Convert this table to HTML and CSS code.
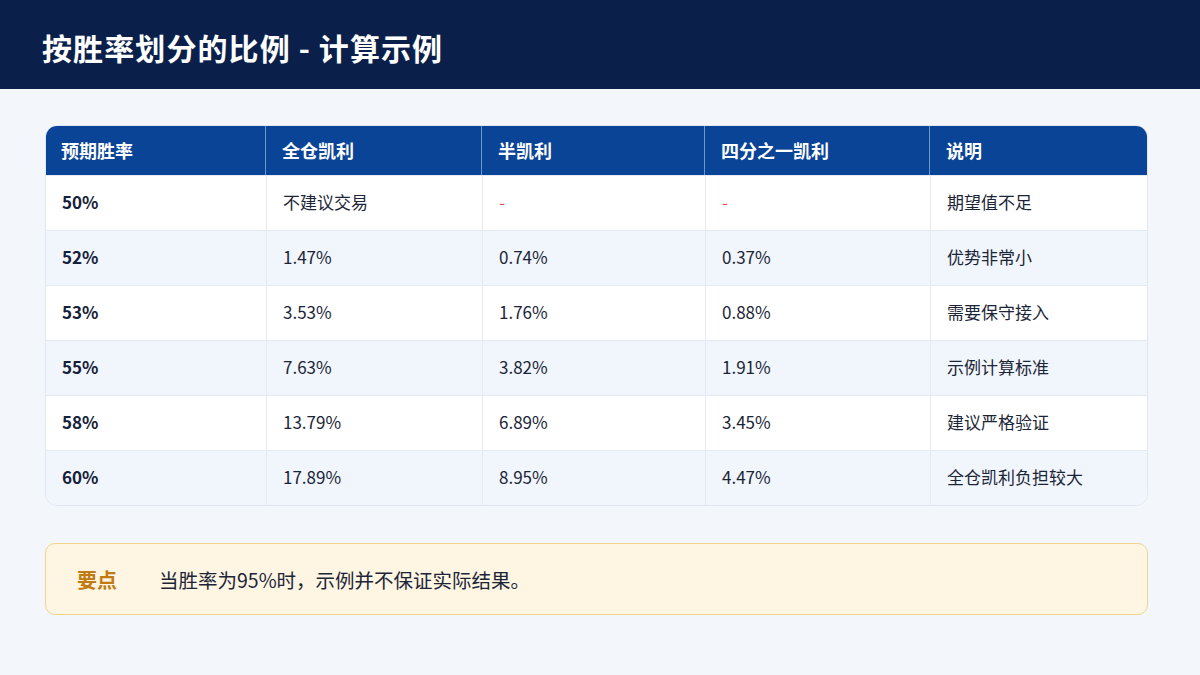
FILE: index.html
```html
<!DOCTYPE html>
<html lang="zh">
<head>
<meta charset="utf-8">
<link rel="stylesheet" href="styles.css">
</head>
<body>
<header class="topbar">
  <h1 class="title">按胜率划分的比例 - 计算示例</h1>
</header>
<main class="content">
  <div class="table">
    <div class="row head">
      <div class="cell">预期胜率</div>
      <div class="cell">全仓凯利</div>
      <div class="cell">半凯利</div>
      <div class="cell">四分之一凯利</div>
      <div class="cell">说明</div>
    </div>
    <div class="row">
      <div class="cell strong">50%</div>
      <div class="cell">不建议交易</div>
      <div class="cell dash">-</div>
      <div class="cell dash">-</div>
      <div class="cell">期望值不足</div>
    </div>
    <div class="row alt">
      <div class="cell strong">52%</div>
      <div class="cell">1.47%</div>
      <div class="cell">0.74%</div>
      <div class="cell">0.37%</div>
      <div class="cell">优势非常小</div>
    </div>
    <div class="row">
      <div class="cell strong">53%</div>
      <div class="cell">3.53%</div>
      <div class="cell">1.76%</div>
      <div class="cell">0.88%</div>
      <div class="cell">需要保守接入</div>
    </div>
    <div class="row alt">
      <div class="cell strong">55%</div>
      <div class="cell">7.63%</div>
      <div class="cell">3.82%</div>
      <div class="cell">1.91%</div>
      <div class="cell">示例计算标准</div>
    </div>
    <div class="row">
      <div class="cell strong">58%</div>
      <div class="cell">13.79%</div>
      <div class="cell">6.89%</div>
      <div class="cell">3.45%</div>
      <div class="cell">建议严格验证</div>
    </div>
    <div class="row alt last">
      <div class="cell strong">60%</div>
      <div class="cell">17.89%</div>
      <div class="cell">8.95%</div>
      <div class="cell">4.47%</div>
      <div class="cell">全仓凯利负担较大</div>
    </div>
  </div>
  <div class="note">
    <span class="note-label">要点</span>
    <span class="note-text">当胜率为95%时，示例并不保证实际结果。</span>
  </div>
</main>
</body>
</html>
```
FILE: styles.css
```css
* { box-sizing: border-box; }
html, body { margin: 0; padding: 0; }
body {
  width: 1200px;
  height: 675px;
  overflow: hidden;
  background: #f3f7fc;
  font-family: "Noto Sans CJK SC", "Noto Sans", sans-serif;
  color: #1b2537;
}
.topbar {
  height: 89px;
  background: #0b1f4b;
  display: flex;
  align-items: center;
  padding-left: 42px;
  padding-top: 4px;
}
.title {
  margin: 0;
  color: #ffffff;
  font-size: 30px;
  font-weight: 700;
  letter-spacing: 1.1px;
}
.content {
  padding: 36px 52px 0 45px;
}
.table {
  width: 1103px;
  border: 1px solid #dfe7f1;
  border-radius: 12px;
  overflow: hidden;
  background: #ffffff;
}
.row {
  display: grid;
  grid-template-columns: 220px 216px 223px 225px 1fr;
  height: 55px;
  border-top: 1px solid #e3eaf3;
}
.row.head {
  height: 50px;
  background: #0a4497;
  border-top: none;
  margin: -1px -1px 0 -1px;
  border-radius: 12px 12px 0 0;
}
.row.alt { background: #f1f6fc; }
.cell {
  display: flex;
  align-items: center;
  padding-left: 16px;
  padding-bottom: 3px;
  font-size: 17px;
  border-left: 1px solid #e3eaf3;
}
.cell:first-child { border-left: none; }
.head .cell {
  color: #ffffff;
  font-weight: 700;
  font-size: 18px;
  padding-bottom: 1px;
  border-left: 1px solid #6f95cc;
}
.head .cell:first-child { border-left: none; }
.strong { font-weight: 700; color: #15213a; }
.dash { color: #e5534f; }
.note {
  margin-top: 37px;
  width: 1103px;
  height: 72px;
  background: #fef5e3;
  border: 1px solid #f0d48c;
  border-radius: 10px;
  display: flex;
  align-items: center;
  padding-left: 31px;
}
.note-label {
  color: #c27a12;
  font-weight: 700;
  font-size: 20px;
  width: 82px;
}
.note-text {
  font-size: 19.5px;
  color: #1b2537;
}
```
